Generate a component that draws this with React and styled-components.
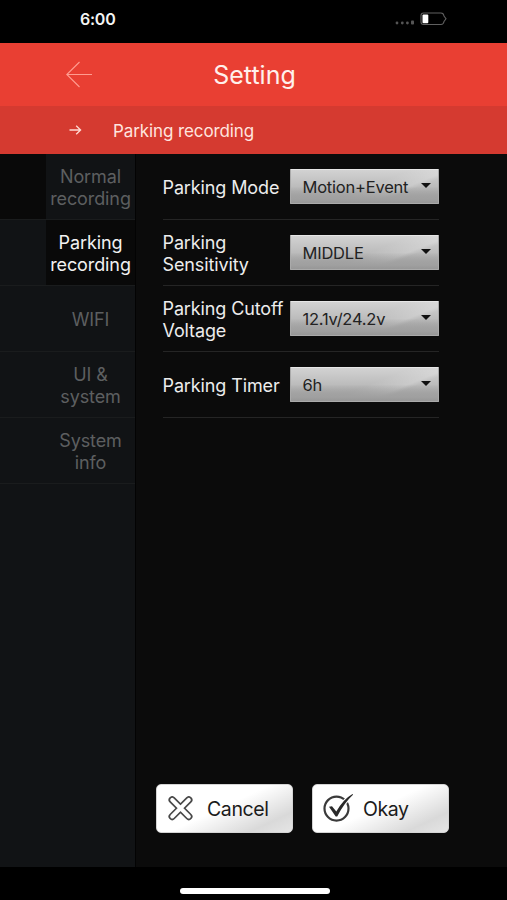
import styled, { createGlobalStyle } from 'styled-components';

const GlobalStyle = createGlobalStyle`
  * {
    box-sizing: border-box;
  }
  body {
    margin: 0;
    background-color: #000;
    font-family: Inter, 'Liberation Sans', sans-serif;
  }
`;

const Screen = styled.div`
  display: flex;
  flex-direction: column;
  width: 507px;
  height: 900px;
  overflow: hidden;
  background-color: #000;
`;

const StatusBar = styled.div`
  display: flex;
  flex: none;
  align-items: center;
  justify-content: space-between;
  height: 43px;
  padding: 0 59px 6px 80px;
`;

const Clock = styled.span`
  color: #f4f4f4;
  font-size: 16px;
  font-weight: 600;
  line-height: 20px;
  letter-spacing: -0.25px;
`;

const Header = styled.header`
  display: grid;
  flex: none;
  grid-template-columns: 66px 26px 1fr 92px;
  align-items: center;
  height: 63px;
  background-color: #e93f33;
`;

const Title = styled.h1`
  margin: 0;
  padding-left: 2px;
  color: #fff0ec;
  font-size: 25px;
  font-weight: 400;
  line-height: 30px;
  text-align: center;
  grid-column: 3;
`;

const BackButton = styled.button`
  display: flex;
  padding: 0;
  border: 0;
  background: none;
  grid-column: 2;
`;

const SubHeader = styled.div`
  display: flex;
  flex: none;
  align-items: center;
  gap: 31px;
  height: 48px;
  padding-left: 69px;
  color: #ffe4df;
  background-color: #d53a30;
`;

const SubTitle = styled.span`
  padding-top: 2px;
  font-size: 17px;
  line-height: 22px;
  letter-spacing: -0.1px;
`;

const Body = styled.div`
  display: flex;
  flex: none;
  height: 713px;
`;

const Sidebar = styled.nav`
  width: 136px;
  height: 713px;
  border-right: 1px solid #030303;
  background-color: #111315;
`;

const Tab = styled.div`
  display: flex;
  height: 66px;
  border-bottom: 1px solid #1a1c1d;
  background-color: ${({ $first }) => ($first ? '#090909' : '#111315')};
`;

const TabLabel = styled.div`
  display: flex;
  align-items: center;
  justify-content: center;
  width: 90px;
  margin-left: 46px;
  padding-top: 3px;
  color: ${({ $active }) => ($active ? '#f2f2f2' : '#5d5f60')};
  background-color: ${({ $active }) => ($active ? '#090909' : '#111315')};
  font-size: 18px;
  line-height: 22px;
  letter-spacing: -0.1px;
  text-align: center;
  white-space: pre-line;
`;

const Content = styled.main`
  display: flex;
  flex: 1;
  flex-direction: column;
  justify-content: space-between;
  padding: 0 59px 34px 27px;
  background-color: #0b0b0b;
`;

const Row = styled.div`
  display: flex;
  align-items: center;
  justify-content: space-between;
  width: 276px;
  height: 66px;
  margin-left: -0.5px;
  border-bottom: 1px solid #252525;
`;

const RowLabel = styled.div`
  width: 127px;
  padding-top: 3px;
  color: #ededed;
  font-size: 18px;
  line-height: 22px;
  letter-spacing: -0.12px;
  white-space: pre;
`;

const Select = styled.button`
  display: flex;
  flex: none;
  align-items: center;
  justify-content: space-between;
  width: 149px;
  height: 35px;
  padding: 1px 7px 0 12px;
  border: 1px solid #aaa;
  border-top-color: #e6e6e6;
  border-radius: 1px;
  color: #222;
  background: linear-gradient(transparent 50%, #a0a0a0 88%, #979797),
    linear-gradient(158deg, transparent 52%, rgba(255, 255, 255, 0.2) 69%, transparent 74%),
    linear-gradient(#d2d2d2, #bcbcbc 50%, #999);
  font-family: inherit;
  font-size: 16.5px;
  letter-spacing: -0.22px;
`;

const Caret = styled.span`
  margin-bottom: 3px;
  border: 5px solid transparent;
  border-top: 5px solid #111;
  border-bottom: 0;
`;

const Actions = styled.div`
  display: flex;
  gap: 19px;
  margin-left: -7px;
`;

const ActionButton = styled.button`
  display: flex;
  flex: none;
  align-items: center;
  gap: ${({ $gap }) => $gap};
  width: 137px;
  height: 49px;
  padding: 0 0 0 10px;
  border: 1px solid #d4d4d4;
  border-radius: 5px;
  color: #1b1b1b;
  background: linear-gradient(155deg, #fff 48%, #d9d9d9 82%, #e5e5e5);
  font-family: inherit;
  font-size: 19.5px;
  letter-spacing: -0.4px;
`;

const HomeArea = styled.div`
  display: flex;
  flex: 1;
  align-items: center;
  justify-content: center;
  padding: 15px 0 0 3px;
`;

const HomeBar = styled.div`
  width: 150px;
  height: 6px;
  border-radius: 3px;
  background-color: #fff;
`;

const tabs = ['Normal\nrecording', 'Parking\nrecording', 'WIFI', 'UI &\nsystem', 'System\ninfo'];

const settings = [
  { label: 'Parking Mode', value: 'Motion+Event' },
  { label: 'Parking\nSensitivity', value: 'MIDDLE' },
  { label: 'Parking Cutoff\nVoltage', value: '12.1v/24.2v' },
  { label: 'Parking Timer', value: '6h' },
];

const StatusIcons = () => (
  <svg width="54" height="16" viewBox="0 0 54 16">
    <g fill="#555">
      <circle cx="3" cy="12" r="1.4" />
      <circle cx="8.3" cy="12" r="1.4" />
      <circle cx="13.4" cy="12" r="1.4" />
      <rect x="17" y="9.5" width="3" height="4" rx="0.8" />
    </g>
    <path
      d="M29.5 2H47q2.5 0 3 3l2 2.7-2 2.8q-.5 3-3 3H29.5q-2.5 0-2.5-2.5V4.5Q27 2 29.5 2z"
      fill="none"
      stroke="#606060"
      strokeWidth="1.1"
    />
    <rect x="28.5" y="3.5" width="5.8" height="8.8" rx="1" fill="#fff" />
  </svg>
);

const BackArrow = () => (
  <svg width="26" height="28" viewBox="0 0 26 28" fill="none" stroke="#ff9c90" strokeWidth="1.1">
    <path d="M13.5 1L.8 13.5l12.7 12.5M.8 13.5H26" />
  </svg>
);

const SmallArrow = () => (
  <svg width="13" height="12" viewBox="0 0 13 12" fill="none" stroke="#ffd9d2" strokeWidth="1.3">
    <path d="M.5 6h11M7.2 1.7L11.6 6l-4.4 4.3" />
  </svg>
);

const CancelIcon = () => (
  <svg width="28" height="26" viewBox="0 0 28 26" fill="none" strokeLinecap="round">
    <path d="M5.2 3.9l16.6 16.6M21.8 3.9L5.2 20.5" stroke="#484848" strokeWidth="7.4" />
    <path d="M5.2 3.9l16.6 16.6M21.8 3.9L5.2 20.5" stroke="#fff" strokeWidth="4" />
  </svg>
);

const OkayIcon = () => (
  <svg width="30" height="30" viewBox="0 0 30 30" fill="none">
    <circle cx="13.5" cy="14.6" r="12" stroke="#3a3a3a" strokeWidth="2.2" />
    <path d="M19 7L26 1l1.5 4-5.5 6.5z" fill="#fff" />
    <path d="M6 12.7l3-.4 4.3 5.2Q20.5 5 29.5 0l.6.6Q21 9 14.2 22.5h-1.5z" fill="#292929" />
  </svg>
);

const App = () => {
  return (
    <Screen>
      <GlobalStyle />
      <StatusBar>
        <Clock>6:00</Clock>
        <StatusIcons />
      </StatusBar>
      <Header>
        <BackButton aria-label="Back">
          <BackArrow />
        </BackButton>
        <Title>Setting</Title>
      </Header>
      <SubHeader>
        <SmallArrow />
        <SubTitle>Parking recording</SubTitle>
      </SubHeader>
      <Body>
        <Sidebar>
          {tabs.map((tab, index) => (
            <Tab key={tab} $first={index === 0}>
              <TabLabel $active={index === 1}>{tab}</TabLabel>
            </Tab>
          ))}
        </Sidebar>
        <Content>
          <div>
            {settings.map(({ label, value }) => (
              <Row key={label}>
                <RowLabel>{label}</RowLabel>
                <Select>
                  {value}
                  <Caret />
                </Select>
              </Row>
            ))}
          </div>
          <Actions>
            <ActionButton $gap="12px">
              <CancelIcon />
              Cancel
            </ActionButton>
            <ActionButton $gap="10px">
              <OkayIcon />
              Okay
            </ActionButton>
          </Actions>
        </Content>
      </Body>
      <HomeArea>
        <HomeBar />
      </HomeArea>
    </Screen>
  );
};

export default App;
